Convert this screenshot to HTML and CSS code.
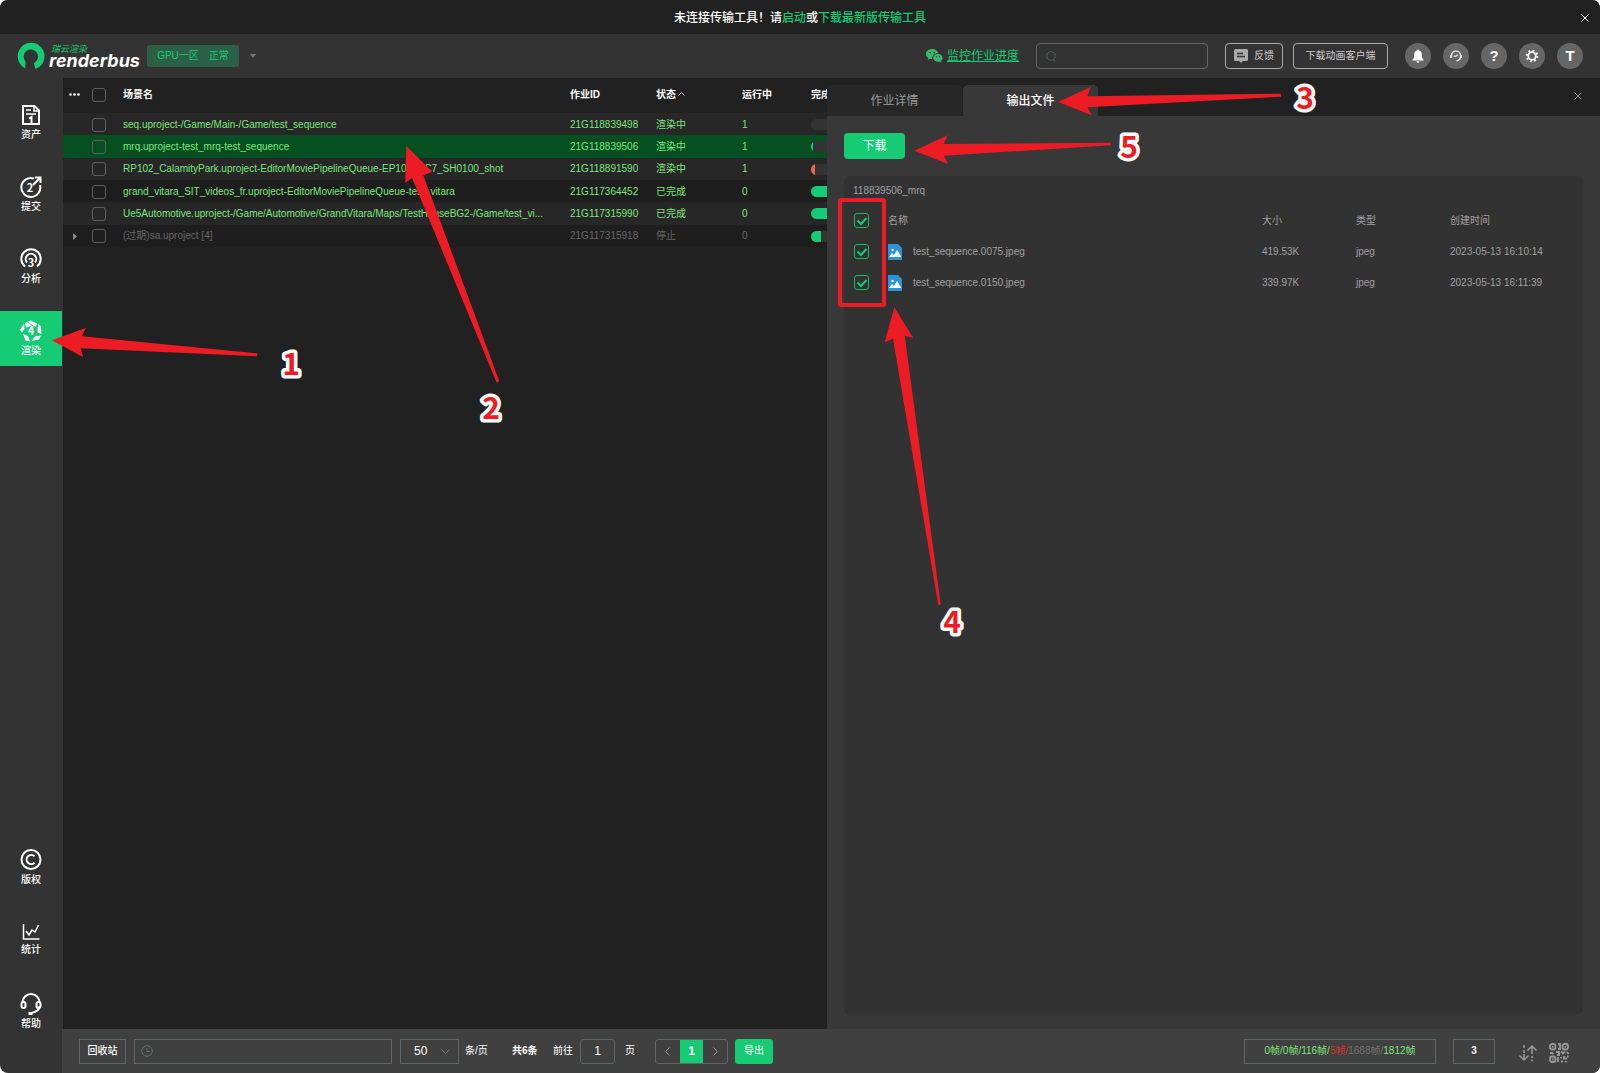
FILE: index.html
```html
<!DOCTYPE html>
<html lang="zh-CN">
<head>
<meta charset="utf-8">
<meta name="viewport" content="width=device-width, initial-scale=1">
<title>Renderbus</title>
<link rel="stylesheet" href="styles.css">
</head>
<body>
<div class="app">
  <div class="notice">
    <p>未连接传输工具！请<a href="#">启动</a>或<a href="#">下载最新版传输工具</a></p>
    <button class="close notice-close" type="button" aria-label="关闭提示"><svg width="8" height="8" viewBox="0 0 8 8"><path d="M.5.5l7 7M7.500.5l-7 7"/></svg></button>
  </div>

  <header class="header">
    <a class="logo" href="#">
      <svg width="28" height="28" viewBox="0 0 28 28"><path d="M5.500 24.500A13.400 13.400 0 1 1 22.500 24.700L18.500 27 16.800 21.200A7.200 7.200 0 1 0 8.500 19.500L8.200 26.500Z" fill="#15cb74"/></svg>
      <span class="logo-words"><span class="logo-cn">瑞云渲染</span><span class="logo-en">renderbus</span></span>
    </a>
    <button class="zone" type="button"><span>GPU一区</span><span>正常</span></button>
    <svg class="caret" width="6" height="4" viewBox="0 0 6 4"><path d="M0 0h6L3 4z" fill="#777"/></svg>
    <a class="wechat" href="#">
      <svg width="17" height="14" viewBox="0 0 17 14"><path d="M6.200 0C2.700 0 0 2.200 0 5c0 1.600.9 3 2.300 3.900L1.700 11l2.300-1.200c.8.2 1.400.3 2.200.3C6 7 8.300 4.300 12.300 4.300 11.800 1.800 9.300 0 6.200 0z" fill="#3db56e"/><path d="M16.500 8.800c0-2.200-2.100-3.900-4.600-3.900S7.200 6.600 7.200 8.800s2.100 3.900 4.700 3.900c.6 0 1.100-.1 1.600-.2l1.900 1-.5-1.700c1-.7 1.600-1.800 1.600-3z" fill="#3db56e"/><g fill="#333"><circle cx="4.200" cy="3.600" r=".8"/><circle cx="8.200" cy="3.600" r=".8"/><circle cx="10.500" cy="7.700" r=".6"/><circle cx="13.400" cy="7.700" r=".6"/></g></svg>
      <span>监控作业进度</span>
    </a>
    <label class="search">
      <svg width="10" height="11" viewBox="0 0 10 11" fill="none" stroke="#55625e"><circle cx="5" cy="5" r="4.300"/><path d="M7 8.500l2 2"/></svg>
      <input type="search" aria-label="搜索">
    </label>
    <button class="outline" type="button">
      <svg width="14" height="14" viewBox="0 0 14 14"><path d="M1.500 0h11A1.500 1.500 0 0 1 14 1.500v9a1.500 1.500 0 0 1-1.500 1.500H9l-2 2-2-2H1.500A1.500 1.500 0 0 1 0 10.500v-9A1.500 1.500 0 0 1 1.500 0z" fill="#aaa"/><path d="M3 4.500h6M3 7.500h8" stroke="#333" stroke-width="1.500"/></svg>
      反馈
    </button>
    <button class="outline client" type="button">下载动画客户端</button>
    <nav class="tools">
      <button type="button" aria-label="通知"><svg width="14" height="14" viewBox="0 0 14 14"><path d="M7 .5c.6 0 .9.4.9.9 1.900.5 2.900 2 2.900 4v3l1.700 2.400v.7h-11v-.7L3.200 8.400v-3c0-2 1-3.500 2.900-4 0-.5.300-.9.900-.9zM5.500 12.200h3a1.500 1.500 0 0 1-3 0z" fill="#fff"/></svg></button>
      <button type="button" aria-label="客服"><svg width="14" height="14" viewBox="0 0 14 14" fill="none" stroke="#ddd" stroke-width="1.500"><path d="M2.500 8V6.500a4.500 4.500 0 0 1 9 0V8c0 2-1.500 3.500-4 4"/><path d="M2 6v3M12 6v3" stroke-width="2"/><path d="M5 7c1.500.5 3 0 3.500-1.500"/></svg></button>
      <button type="button" aria-label="帮助">?</button>
      <button type="button" aria-label="设置"><svg width="14" height="14" viewBox="0 0 16 16" fill="none" stroke="#fff"><circle cx="8" cy="8" r="4.300" stroke-width="2"/><circle cx="8" cy="8" r="6" stroke-width="2.500" stroke-dasharray="2 2.712"/></svg></button>
      <button type="button" aria-label="账户">T</button>
    </nav>
  </header>

  <div class="main">
    <nav class="sidebar">
      <a href="#"><svg width="22" height="22" viewBox="0 0 22 22" fill="none" stroke="#fff" stroke-width="2"><path d="M14.500 2H3v18h16V6.500z"/><path d="M14 2v5h5" stroke-width="1.500"/><path d="M6 6h5M6 10h10" stroke-width="1.500"/><path d="M9 14.500l2.500-1.500v7"/></svg>资产</a>
      <a href="#"><svg width="22" height="22" viewBox="0 0 22 22" fill="none" stroke="#fff" stroke-width="2"><path d="M14 2.500A9.500 9.500 0 1 0 20 9M13 9l7.500-7.500M15 1.500h5.500V7"/><text class="glyph" x="10" y="16">2</text></svg>提交</a>
      <a href="#"><svg width="22" height="22" viewBox="0 0 22 22" fill="none" stroke="#fff" stroke-width="2"><path d="M5 18.500a9.700 9.700 0 1 1 12 0"/><path d="M7 14.500a5.300 5.300 0 1 1 8 0"/><text class="glyph" x="11" y="19">3</text></svg>分析</a>
      <a class="active" href="#"><svg width="22" height="22" viewBox="0 0 22 22"><path d="M7.500 1.500L10.500.5 17 3.500 15.500 7zM18 4l3 2.500.5 7.500-4-1.500zM21 15.500l-2 4-7.500 1.500 3.500-4.500zM10 21.500l-4.500-1L3 14l5 2zM2 12.500L0 10l4-6.500.5 5.500zM5 3.500L7 2l5 3.500-6 2z" fill="#fff"/><text class="glyph" x="11" y="15">4</text></svg>渲染</a>
      <div class="spacer"></div>
      <a href="#"><svg width="22" height="22" viewBox="0 0 22 22" fill="none" stroke="#fff" stroke-width="2"><circle cx="11" cy="10.500" r="9.500"/><path d="M14.500 7.200a4.600 4.600 0 1 0 0 6.600"/></svg>版权</a>
      <a href="#"><svg width="22" height="20" viewBox="0 0 22 20" fill="none" stroke="#fff" stroke-width="1.500"><path d="M3.500 3v15h16M6 10l3 4 3-5 3 2 3.500-7"/></svg>统计</a>
      <a href="#"><svg width="22" height="22" viewBox="0 0 22 22" fill="none" stroke="#fff" stroke-width="2"><path d="M2.500 9.500a8.500 8.500 0 0 1 17 0M19.500 13c0 3.500-3 6-8 7"/><rect x="1.500" y="9" width="4" height="6" rx="2"/><rect x="16.500" y="9" width="4" height="6" rx="2"/><path d="M8.500 20.500h4" stroke-width="3"/></svg>帮助</a>
    </nav>

    <div class="content">
      <div class="split">
        <section class="jobs">
          <table class="job-table">
            <colgroup><col class="c-more"><col class="c-check"><col><col class="c-id"><col class="c-state"><col class="c-run"><col class="c-done"></colgroup>
            <thead><tr><th class="more"><svg width="11" height="3" viewBox="0 0 11 3" fill="#fff"><circle cx="1.500" cy="1.500" r="1.300"/><circle cx="5.500" cy="1.500" r="1.300"/><circle cx="9.500" cy="1.500" r="1.300"/></svg></th><th class="check"><input type="checkbox" aria-label="全选作业"></th><th>场景名</th><th>作业ID</th><th>状态<svg class="sort" width="7" height="4" viewBox="0 0 7 4"><path d="M.5 3.500l3-3 3 3" fill="none" stroke="#ccc"/></svg></th><th>运行中</th><th>完成度</th></tr></thead>
            <tbody>
              <tr><td></td><td class="check"><input type="checkbox" aria-label="选择 21G118839498"></td><td>seq.uproject-/Game/Main-/Game/test_sequence</td><td>21G118839498</td><td>渲染中</td><td>1</td><td><div class="bar"></div></td></tr>
              <tr class="selected"><td></td><td class="check"><input type="checkbox" aria-label="选择 21G118839506"></td><td>mrq.uproject-test_mrq-test_sequence</td><td>21G118839506</td><td>渲染中</td><td>1</td><td><div class="bar"><div class="fill" style="width:3%"></div></div></td></tr>
              <tr><td></td><td class="check"><input type="checkbox" aria-label="选择 21G118891590"></td><td>RP102_CalamityPark.uproject-EditorMoviePipelineQueue-EP102_SC7_SH0100_shot</td><td>21G118891590</td><td>渲染中</td><td>1</td><td><div class="bar"><div class="fill failed" style="width:5%"></div></div></td></tr>
              <tr><td></td><td class="check"><input type="checkbox" aria-label="选择 21G117364452"></td><td>grand_vitara_SIT_videos_fr.uproject-EditorMoviePipelineQueue-test_vitara</td><td>21G117364452</td><td>已完成</td><td>0</td><td><div class="bar"><div class="fill" style="width:100%"></div></div></td></tr>
              <tr><td></td><td class="check"><input type="checkbox" aria-label="选择 21G117315990"></td><td>Ue5Automotive.uproject-/Game/Automotive/GrandVitara/Maps/TestHouseBG2-/Game/test_vi...</td><td>21G117315990</td><td>已完成</td><td>0</td><td><div class="bar"><div class="fill" style="width:100%"></div></div></td></tr>
              <tr class="expired"><td class="more"><svg width="4" height="7" viewBox="0 0 4 7"><path d="M0 0l4 3.500L0 7z" fill="#888"/></svg></td><td class="check"><input type="checkbox" aria-label="选择 21G117315918"></td><td>(过期)sa.uproject [4]</td><td>21G117315918</td><td>停止</td><td>0</td><td><div class="bar"><div class="fill" style="width:12%"></div></div></td></tr>
            </tbody>
          </table>
        </section>

        <section class="panel">
          <div class="tabs">
            <button class="tab" type="button">作业详情</button>
            <button class="tab current" type="button">输出文件</button>
            <button class="close panel-close" type="button" aria-label="关闭"><svg width="8" height="8" viewBox="0 0 8 8"><path d="M.5.5l7 7M7.500.5l-7 7"/></svg></button>
          </div>
          <div class="panel-body">
            <button class="download" type="button">下载</button>
            <div class="files">
              <h2>118839506_mrq</h2>
              <table class="file-table">
                <colgroup><col class="f-check"><col><col class="f-mid"><col class="f-mid"><col class="f-time"></colgroup>
                <thead><tr><th><input type="checkbox" checked aria-label="全选文件"></th><th>名称</th><th>大小</th><th>类型</th><th>创建时间</th></tr></thead>
                <tbody>
                  <tr><td><input type="checkbox" checked aria-label="选择 test_sequence.0075.jpeg"></td><td><span class="file"><svg width="14" height="16" viewBox="0 0 14 16"><path d="M0 0h10l4 4v12H0z" fill="#2b93d6"/><path d="M1 13l3-4 2 2 3-5 4.500 7z" fill="#fff"/><circle cx="4.500" cy="6" r="1.200" fill="#fff"/></svg>test_sequence.0075.jpeg</span></td><td>419.53K</td><td>jpeg</td><td>2023-05-13 16:10:14</td></tr>
                  <tr><td><input type="checkbox" checked aria-label="选择 test_sequence.0150.jpeg"></td><td><span class="file"><svg width="14" height="16" viewBox="0 0 14 16"><path d="M0 0h10l4 4v12H0z" fill="#2b93d6"/><path d="M1 13l3-4 2 2 3-5 4.500 7z" fill="#fff"/><circle cx="4.500" cy="6" r="1.200" fill="#fff"/></svg>test_sequence.0150.jpeg</span></td><td>339.97K</td><td>jpeg</td><td>2023-05-13 16:11:39</td></tr>
                </tbody>
              </table>
            </div>
          </div>
        </section>
      </div>

      <footer class="footer">
        <button class="box recycle" type="button">回收站</button>
        <label class="box period"><svg width="12" height="12" viewBox="0 0 12 12" fill="none" stroke="#66706c"><circle cx="6" cy="6" r="5.300"/><path d="M6 3v3.500h3"/></svg><input type="text" aria-label="时间范围"></label>
        <select class="box size" id="size"><option>50</option></select>
        <label class="per" for="size">条/页</label>
        <strong class="total">共6条</strong>
        <label class="goto">前往<input class="box" type="text" value="1">页</label>
        <div class="pager">
          <button type="button" aria-label="上一页"><svg width="5" height="9" viewBox="0 0 5 9"><path d="M4.500.5l-4 4 4 4"/></svg></button>
          <button class="on" type="button">1</button>
          <button type="button" aria-label="下一页"><svg width="5" height="9" viewBox="0 0 5 9"><path d="M.5.5l4 4-4 4"/></svg></button>
        </div>
        <button class="export" type="button">导出</button>
        <div class="box frames">0帧/0帧/116帧/<span class="bad">5帧/</span><span class="dim">1688帧/</span>1812帧</div>
        <div class="box count">3</div>
        <button class="plain" type="button" aria-label="传输"><svg width="20" height="18" viewBox="0 0 20 18" fill="none" stroke="#999" stroke-width="1.500"><path d="M6 1v3M6 6v3M6 10v6M1.500 11.500L6 16l4.500-4.500M14 2v8M14 12v2M14 15.500v2M9.500 6.500L14 2l4.500 4.500"/></svg></button>
        <button class="plain" type="button" aria-label="二维码"><svg width="20" height="20" viewBox="0 0 20 20" fill="none" stroke="#999" stroke-width="1.800"><rect x="1" y="1" width="5.500" height="5.500" rx="2"/><rect x="13.500" y="1" width="5.500" height="5.500" rx="2"/><rect x="1" y="13.500" width="5.500" height="5.500" rx="2"/><path d="M3 3.800h1.500M15.500 3.800H17M3 16.300h1.500M9 1h2v5H9M1 10h2l1.500 1M7 9h3v3H8M12 8.500l2 2 2-2M18 9l1.500 2M9 14v5M12 14v1.500M15 13v2.500h3M12 18.500h2M17 18v1.500M18 13.500h1.500"/></svg></button>
      </footer>
    </div>
  </div>

  <svg class="marks" aria-hidden="true">
    <path d="M51.700 340.300L85.700 328 82 336.300 257.300 353.300V356.300L80.700 348.300 83 357Z"/>
    <path d="M406.300 146L432.300 171.700 423.300 175.300 499.300 381.300 496.700 382.700 412 177.700 405.300 183Z"/>
    <path d="M1058 102L1090.700 87 1087.300 96.300 1281 93.700V96.700L1087.300 107.300 1091.800 115.300Z"/>
    <path d="M894.300 307.300L913.300 338 904.700 335.700 940.700 604.700 938.300 605.300 893 338.700 884.700 342.300Z"/>
    <path d="M914.300 150.700L947.700 135.300 943.700 144 1111.300 142.700V145.300L944 155.700 948 164Z"/>
    <rect x="840" y="200" width="44" height="105" rx="1"/>
    <text x="291" y="375">1</text>
    <text x="491" y="419">2</text>
    <text x="1305" y="109">3</text>
    <text x="952" y="633">4</text>
    <text x="1129" y="158">5</text>
  </svg>
</div>
</body>
</html>
```
FILE: styles.css
```css
* { box-sizing: border-box; }

body {
  margin: 0;
  background: #fff;
  color: #fff;
  font: 10px/14px "Liberation Sans", "Noto Sans CJK SC", sans-serif;
}

a { color: inherit; text-decoration: none; }

button, input, select {
  margin: 0;
  padding: 0;
  border: 0;
  background: none;
  color: inherit;
  font: inherit;
  outline: 0;
}

svg { flex: none; display: block; }
p, h2 { margin: 0; }

.app {
  position: relative;
  display: flex;
  flex-direction: column;
  min-height: 100vh;
  border-radius: 8px;
  overflow: hidden;
  background: #333;
}

/* notice bar */
.notice {
  display: flex;
  align-items: center;
  height: 34px;
  padding: 1px 11px 0;
  background: #212121;
  font-size: 12px;
  font-weight: 500;
}
.notice p { flex: 1; padding-left: 8px; text-align: center; }
.notice a { color: #15cb74; }
.close svg { fill: none; stroke: #fff; }

/* header */
.header {
  display: flex;
  align-items: center;
  height: 44px;
  padding: 0 17px;
}
.logo { display: flex; align-items: center; gap: 4px; width: 130px; }
.logo-words { display: flex; flex-direction: column; font-style: italic; }
.logo-cn { padding-left: 2px; color: #15cb74; font-size: 9px; line-height: 10px; }
.logo-en { font: italic 700 18px/14px Inter, sans-serif; }
.zone {
  display: flex;
  align-items: center;
  justify-content: center;
  gap: 10px;
  width: 92px;
  height: 22px;
  border-radius: 3px;
  background: #2b6047;
  color: #15cb74;
}
.caret { margin-left: 11px; }
.wechat {
  display: flex;
  align-items: center;
  gap: 4px;
  margin-left: auto;
  color: #15cb74;
  font-size: 12px;
  text-decoration: underline;
}
.search {
  display: flex;
  align-items: center;
  width: 172px;
  height: 26px;
  margin: 0 17px;
  padding: 0 9px;
  border: 1px solid #5f6866;
  border-radius: 4px;
}
.search input, .period input { flex: 1; min-width: 0; }
.outline {
  display: flex;
  align-items: center;
  justify-content: center;
  gap: 6px;
  width: 58px;
  height: 26px;
  margin-right: 10px;
  border: 1px solid #aaa;
  border-radius: 4px;
  color: #ccc;
}
.client { width: 95px; margin-right: 17px; }
.tools { display: flex; gap: 12px; }
.tools button {
  display: grid;
  place-items: center;
  width: 26px;
  height: 26px;
  border-radius: 50%;
  background: #666;
  font-size: 15px;
  font-weight: 700;
}

/* frame */
.main { flex: 1; display: flex; }
.sidebar {
  display: flex;
  flex-direction: column;
  gap: 17px;
  width: 62px;
  padding: 17px 0 34px;
}
.sidebar a {
  display: flex;
  flex-direction: column;
  align-items: center;
  gap: 2px;
  height: 55px;
  padding-top: 9px;
  font-size: 10px;
  font-weight: 500;
}
.sidebar .active { background: #15cb74; }
.spacer { flex: 1; margin-bottom: -17px; }
.glyph { fill: #fff; stroke: none; font: 700 11px "Noto Sans CJK SC", sans-serif; text-anchor: middle; }
.content { flex: 1; min-width: 0; display: flex; flex-direction: column; }
.split {
  flex: 1;
  display: grid;
  grid-template-columns: minmax(0, 765fr) minmax(0, 773fr);
}

/* job list */
.jobs { overflow: hidden; border-left: 1px solid #333; background: #212121; }
table { width: 100%; border-collapse: collapse; table-layout: fixed; }
th, td { padding: 0; text-align: left; white-space: nowrap; }
.job-table { height: 169px; color: #7be67b; }
.job-table thead { color: #fff; }
.job-table th { height: 35px; padding-bottom: 2px; overflow: hidden; }
.job-table td { padding-top: 1px; overflow: hidden; }
.c-more { width: 23px; }
.c-check { width: 37px; }
.c-id, .c-state { width: 86px; }
.c-run { width: 69px; }
.c-done { width: 16px; }
.more svg { margin: 0 auto; }
.job-table .check { padding-left: 6px; }
.sort { display: inline-block; margin: 0 0 2px 2px; }
.job-table tbody tr:nth-child(odd) { background: #272727; }
.job-table tbody tr:nth-child(even) { background: #1e1e1e; }
.job-table tbody tr.selected { background: #054f20; }
.job-table .expired { color: #666; }
.bar { width: 80px; height: 11px; border-radius: 6px; background: #333; overflow: hidden; }
.fill { height: 11px; background: #15cb74; }
.failed { background: #f0654a; }

input[type="checkbox"] {
  appearance: none;
  display: block;
  width: 14px;
  height: 14px;
  border: 1px solid #5e5e5e;
  border-radius: 3px;
}
input[type="checkbox"]:checked {
  border-color: #17b96c;
  background: url("data:image/svg+xml,%3Csvg xmlns='http://www.w3.org/2000/svg' viewBox='0 0 12 12'%3E%3Cpath d='M1.500 5.500l3.500 3.500 5.500-6' fill='none' stroke='%2315cb74' stroke-width='2'/%3E%3C/svg%3E") center / 12px 12px no-repeat;
}

/* output panel */
.panel { display: flex; flex-direction: column; background: #383838; }
.tabs {
  display: flex;
  align-items: flex-end;
  gap: 1px;
  height: 38px;
  padding-right: 18px;
  background: #212121;
}
.tab {
  width: 135px;
  height: 31px;
  border-radius: 5px 5px 0 0;
  background: #272727;
  color: #999;
  font-size: 12px;
}
.tab.current { background: #383838; color: #fff; font-weight: 500; }
.panel-close { margin: 0 0 16px auto; }
.panel-close svg { stroke: #999; }
.panel-body { flex: 1; display: flex; flex-direction: column; gap: 17px; padding: 17px 17px 15px; }
.download {
  width: 61px;
  height: 26px;
  border-radius: 4px;
  background: #15cb74;
  font-size: 12px;
}
.files { flex: 1; border-radius: 5px; background: #323232; color: #a0a0a0; }
.files h2 { height: 29px; padding-left: 9px; font-size: 10px; line-height: 29px; font-weight: 400; }
.file-table th, .file-table td { height: 31px; font-weight: 400; }
.file-table input[type="checkbox"] { width: 15px; height: 15px; margin-left: 10px; }
.f-check { width: 44px; }
.f-mid { width: 94px; }
.f-time { width: 133px; }
.file { display: flex; align-items: center; gap: 11px; }

/* footer */
.footer { display: flex; align-items: center; height: 44px; padding: 0 31px 0 17px; background: #404040; }
.box { height: 25px; border: 1px solid #5f6866; }
.recycle { width: 47px; margin-right: 8px; font-weight: 500; }
.period { display: flex; align-items: center; width: 258px; padding-left: 6px; }
.size {
  appearance: none;
  width: 59px;
  margin: 0 6px 0 8px;
  padding-left: 13px;
  background: url("data:image/svg+xml,%3Csvg xmlns='http://www.w3.org/2000/svg' viewBox='0 0 9 5'%3E%3Cpath d='M.5.5l4 4 4-4' fill='none' stroke='%23777'/%3E%3C/svg%3E") right 8px center / 9px 5px no-repeat;
  font-size: 12px;
}
.per { width: 47px; }
.total { width: 41px; }
.goto { display: flex; align-items: center; }
.goto .box { width: 35px; margin: 0 10px 0 7px; border-radius: 3px; font-size: 12px; text-align: center; }
.pager { display: flex; width: 73px; height: 25px; margin: 0 7px 0 20px; border: 1px solid #5f6866; border-radius: 3px; }
.pager button { flex: 1; display: grid; place-items: center; font-size: 12px; }
.pager .on { background: #15cb74; font-weight: 700; }
.pager svg { fill: none; stroke: #999; }
.export { width: 38px; height: 25px; border-radius: 3px; background: #15cb74; }
.frames, .count { display: flex; align-items: center; justify-content: center; }
.frames { width: 192px; margin-left: auto; color: #7be67b; }
.bad { color: #d8342a; }
.dim { color: #707070; }
.count { width: 42px; margin: 0 23px 0 17px; font-weight: 700; }
.plain { padding-top: 4px; }
.plain + .plain { margin-left: 11px; }

/* tutorial marks drawn over the interface */
.marks { position: absolute; inset: 0; width: 100%; height: 100%; pointer-events: none; }
.marks path { fill: #ed1c24; }
.marks rect { fill: none; stroke: #ed1c24; stroke-width: 4px; }
.marks text {
  fill: #ed1c24;
  stroke: #fff;
  stroke-width: 7px;
  stroke-linejoin: round;
  paint-order: stroke;
  font: 700 30px "Noto Sans CJK SC", sans-serif;
  text-anchor: middle;
}
```
